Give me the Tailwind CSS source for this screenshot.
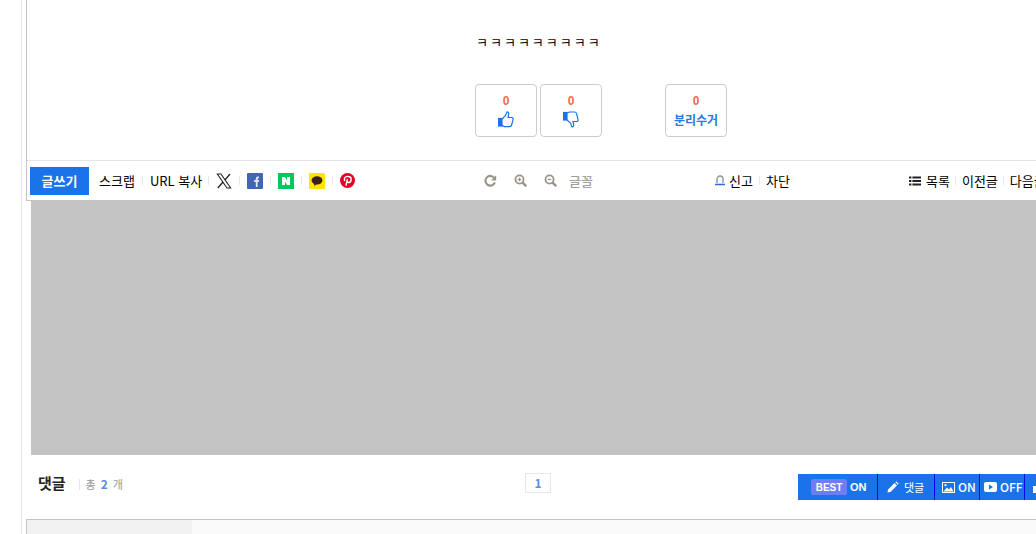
<!DOCTYPE html>
<html lang="ko"><head><meta charset="utf-8">
<script src="https://cdn.jsdelivr.net/npm/@tailwindcss/browser@4"></script></head>
<body class="bg-white overflow-hidden">
<div class="w-[1036px] h-[534px] overflow-hidden bg-white font-['Noto_Sans_CJK_KR','Noto_Sans',sans-serif] text-[13px] text-black">
<div class="ml-[21px] w-[1100px] h-[534px] border-l border-[#e3e3e3] pl-[4px] flex flex-col">
  <!-- article box -->
  <div class="h-[201px] w-[1100px] border-l border-b border-[#c4c4c4] flex flex-col shrink-0">
    <div class="h-[160px] shrink-0 flex flex-col pl-[448px] pt-[33px]">
      <p class="h-[18px] leading-[18px] pl-[1px] text-[13px] tracking-[2px] whitespace-nowrap">ㅋㅋㅋㅋㅋㅋㅋㅋㅋ</p>
      <div class="flex mt-[33px] gap-[3px]">
        <button class="w-[62px] h-[53px] border border-[#cbcbd0] rounded-[4px] flex flex-col items-center pt-[8px]">
          <span class="text-[12px] leading-[16px] font-bold text-[#f4694f] font-['Liberation_Sans',sans-serif]">0</span>
          <svg class="w-[16px] h-[17px] mt-[2px]" viewBox="0 0 16 17" fill="none" stroke="#1a73e8" stroke-width="1.2"><rect x="0.6" y="7.5" width="3.4" height="7.5" fill="#1a73e8"/><path d="M4 8 L7.5 4.5 L9 0.8 Q11 0.8 10.6 3.5 L10 6.5 H14 Q15.6 6.8 15 8.6 L13.6 14 Q13.2 15.6 11.5 15.6 H6.5 L4 14.6"/></svg>
        </button>
        <button class="w-[62px] h-[53px] border border-[#cbcbd0] rounded-[4px] flex flex-col items-center pt-[8px]">
          <span class="text-[12px] leading-[16px] font-bold text-[#f4694f] font-['Liberation_Sans',sans-serif]">0</span>
          <svg class="w-[16px] h-[17px] mt-[2px]" viewBox="0 0 16 17" fill="none" stroke="#1a73e8" stroke-width="1.2"><rect x="0.6" y="1.5" width="3.4" height="7.5" fill="#1a73e8"/><path d="M4 9 L7.5 12 L9 16 Q11 16 10.6 13.2 L10 10.5 H14 Q15.6 10.2 15 8.4 L13.6 2.6 Q13.2 1 11.5 1 H6.5 L4 2"/></svg>
        </button>
        <button class="w-[62px] h-[53px] ml-[60px] border border-[#cbcbd0] rounded-[4px] flex flex-col items-center pt-[8px]">
          <span class="text-[12px] leading-[16px] font-bold text-[#f4694f] font-['Liberation_Sans',sans-serif]">0</span>
          <span class="text-[12px] leading-[18px] mt-[2px] font-bold text-[#2a78dc]">분리수거</span>
        </button>
      </div>
    </div>
    <!-- toolbar -->
    <div class="h-[40px] border-t border-[#e6e6e6] flex items-center pl-[3px] shrink-0">
      <button class="w-[59px] h-[28px] bg-[#1a73e8] text-white font-bold text-[13px] shrink-0">글쓰기</button>
      <div class="w-[264px] shrink-0 flex items-center pl-[10px] h-full whitespace-nowrap">
        <span class="shrink-0">스크랩</span><i class="w-px h-[9px] bg-[#e8e8e8] mx-[7px] shrink-0"></i>
        <span class="shrink-0">URL 복사</span><i class="w-px h-[9px] bg-[#e8e8e8] ml-[6px] mr-[7px] shrink-0"></i>
        <svg class="w-[16px] h-[16px] shrink-0" viewBox="0 0 24 24" fill="none" stroke="#222" stroke-width="1.6"><path d="M2 1.5 H7.5 L22 22.5 H16.5 Z"/><path d="M21 1.5 L13.2 10.6 M10.6 13.6 L2.6 22.5" stroke-width="2"/></svg>
        <i class="w-px h-[9px] bg-[#e8e8e8] mx-[7px] shrink-0"></i>
        <svg class="w-[16px] h-[16px] shrink-0" viewBox="0 0 16 16"><rect width="16" height="16" rx="1" fill="#4267b2"/><path d="M8.8 14 V9 H7.2 V7 H8.8 V5.6 Q8.8 3.4 11 3.4 H12 V5.2 H11.2 Q10.6 5.2 10.6 5.9 V7 H12 L11.8 9 H10.6 V14 Z" fill="#dfe6f3"/></svg>
        <i class="w-px h-[9px] bg-[#e8e8e8] mx-[7px] shrink-0"></i>
        <svg class="w-[16px] h-[16px] shrink-0" viewBox="0 0 16 16"><rect width="16" height="16" fill="#03c75a"/><path d="M4 4 H7 L9 7.4 V4 H12 V12 H9 L7 8.6 V12 H4 Z" fill="#fff"/></svg>
        <i class="w-px h-[9px] bg-[#e8e8e8] mx-[7px] shrink-0"></i>
        <svg class="w-[16px] h-[16px] shrink-0" viewBox="0 0 16 16"><rect width="16" height="16" rx="1" fill="#fde500"/><ellipse cx="8" cy="7.4" rx="5.4" ry="4.2" fill="#3a1d1d"/><path d="M5.5 10 L5 13 L8 11Z" fill="#3a1d1d"/></svg>
        <i class="w-px h-[9px] bg-[#e8e8e8] mx-[7px] shrink-0"></i>
        <svg class="w-[15px] h-[15px] shrink-0" viewBox="0 0 16 16"><circle cx="8" cy="8" r="8" fill="#e60023"/><path d="M6.4 13.5 L7.9 6.6 M5 8.6 Q3.8 4 8 3.6 Q12 3.6 11.9 7 Q11.6 10.4 8.8 10.2 Q7.6 10 7.5 9" fill="none" stroke="#fff" stroke-width="1.6"/></svg>
      </div>
      <div class="w-[120px] ml-[131px] shrink-0 flex items-center">
        <svg class="w-[13px] h-[13px] shrink-0" viewBox="0 0 16 16" fill="none" stroke="#9a9488" stroke-width="2.6"><path d="M13.5 6.5 A6 6 0 1 0 13.4 10.4"/><path d="M15 1.5 V8 H8.8 Z" fill="#9a9488" stroke="none"/></svg>
        <svg class="w-[13px] h-[13px] ml-[17px] shrink-0" viewBox="0 0 16 16" fill="none" stroke="#9a9488" stroke-width="2.2"><circle cx="6.8" cy="6.8" r="5"/><path d="M10.6 10.6 L15 15" stroke-width="3"/><path d="M4.5 6.8 H9 M6.8 4.5 V9" stroke-width="1.6"/></svg>
        <svg class="w-[13px] h-[13px] ml-[17px] shrink-0" viewBox="0 0 16 16" fill="none" stroke="#9a9488" stroke-width="2.2"><circle cx="6.8" cy="6.8" r="5"/><path d="M10.6 10.6 L15 15" stroke-width="3"/><path d="M4.5 6.8 H9" stroke-width="1.6"/></svg>
        <span class="ml-[12px] font-medium text-[#a0a0a0]">글꼴</span>
      </div>
      <div class="w-[194px] ml-[111px] shrink-0 flex items-center">
        <svg class="w-[10px] h-[11px] shrink-0" viewBox="0 0 10 11" fill="none"><path d="M2 8 V4 A3 3 0 0 1 8 4 V8" stroke="#8a8f99" stroke-width="1.3"/><path d="M0 9.5 H10" stroke="#2f6fe0" stroke-width="1.6"/></svg>
        <span class="ml-[4px]">신고</span><i class="w-px h-[9px] bg-[#e8e8e8] mx-[6px]"></i><span>차단</span>
      </div>
      <div class="flex items-center shrink-0 whitespace-nowrap">
        <svg class="w-[12px] h-[10px] shrink-0" viewBox="0 0 12 10" fill="#222"><path d="M0 0.5H2.4V2.5H0ZM3.4 0.5H12V2.5H3.4ZM0 4H2.4V6H0ZM3.4 4H12V6H3.4ZM0 7.5H2.4V9.5H0ZM3.4 7.5H12V9.5H3.4Z"/></svg>
        <span class="ml-[5px]">목록</span><i class="w-px h-[9px] bg-[#e8e8e8] ml-[5px] mr-[6px]"></i>
        <span>이전글</span><i class="w-px h-[9px] bg-[#e8e8e8] ml-[5px] mr-[6px]"></i>
        <span>다음글</span>
      </div>
    </div>
  </div>
  <!-- gray panel -->
  <div class="ml-[5px] w-[1100px] h-[255px] -mt-px bg-[#c3c3c3] shrink-0"></div>
  <!-- comment head -->
  <div class="h-[64px] shrink-0 flex items-center">
    <div class="w-[499px] shrink-0 flex items-center pl-[12px] mb-[8px]">
      <span class="text-[15px] font-bold text-[#222]">댓글</span>
      <i class="w-px h-[11px] bg-[#e3e6ec] ml-[13px] mt-[2px]"></i>
      <span class="ml-[6px] mt-[2px] text-[11px] text-[#999] whitespace-nowrap">총<b class="mx-[5px] text-[12px] text-[#5a8fe0] font-bold">2</b>개</span>
    </div>
    <div class="w-[26px] h-[20px] mb-[8px] shrink-0 border border-[#e8e8e8] flex items-center justify-center text-[12px] font-bold text-[#5a8fe0]">1</div>
    <div class="ml-[247px] h-[26px] shrink-0 bg-[#1a73e8] flex items-center text-white font-bold text-[11px] whitespace-nowrap">
      <div class="w-[80px] h-full border-r border-[#0a0ae6] flex items-center pl-[13px]">
        <span class="w-[36px] h-[16px] bg-[#6f7df5] rounded-[2px] flex items-center justify-center text-[10px] font-['Liberation_Sans',sans-serif]">BEST</span>
        <span class="ml-[3px] font-['Liberation_Sans',sans-serif]">ON</span>
      </div>
      <div class="w-[57px] h-full border-r border-[#0a0ae6] flex items-center pl-[9px] font-normal">
        <svg class="w-[12px] h-[12px] shrink-0" viewBox="0 0 12 12" fill="#fff"><path d="M0.5 11.5 L1 8.5 L7.5 2 L10 4.5 L3.5 11 Z M8.3 1.2 L9.3 0.3 L11.7 2.7 L10.8 3.7 Z"/></svg>
        <span class="ml-[5px]">댓글</span>
      </div>
      <div class="w-[45px] h-full border-r border-[#0a0ae6] flex items-center pl-[7px]">
        <svg class="w-[13px] h-[11px] shrink-0" viewBox="0 0 13 11" fill="none"><rect x="0.5" y="0.5" width="12" height="10" stroke="#fff"/><circle cx="3.5" cy="3.2" r="1.1" fill="#fff"/><path d="M1.5 9.5 L5 5.5 L7 7.5 L9 5 L11.5 9.5 Z" fill="#fff"/></svg>
        <span class="ml-[3px] text-[12px] font-medium">ON</span>
      </div>
      <div class="w-[45px] h-full border-r border-[#0a0ae6] flex items-center pl-[4px]">
        <svg class="w-[13px] h-[10px] shrink-0" viewBox="0 0 13 10"><rect width="13" height="10" rx="2" fill="#fff"/><path d="M5 2.5 L9 5 L5 7.5Z" fill="#1a73e8"/></svg>
        <span class="ml-[3px] text-[12px] font-medium">OFF</span>
      </div>
      <div class="w-[60px] h-full flex items-center pl-[8px]">
        <svg class="w-[12px] h-[12px] shrink-0" viewBox="0 0 12 12" fill="#fff"><path d="M3 0H9V5H12V12H0V5H3Z"/></svg>
      </div>
    </div>
  </div>
  <div class="h-[15px] shrink-0 w-[1100px] border-t border-l border-[#c4c4c4] bg-[#f9f9f9]"><div class="w-[165px] h-full bg-[#f2f2f2]"></div></div>
</div>
</div>
</body></html>
